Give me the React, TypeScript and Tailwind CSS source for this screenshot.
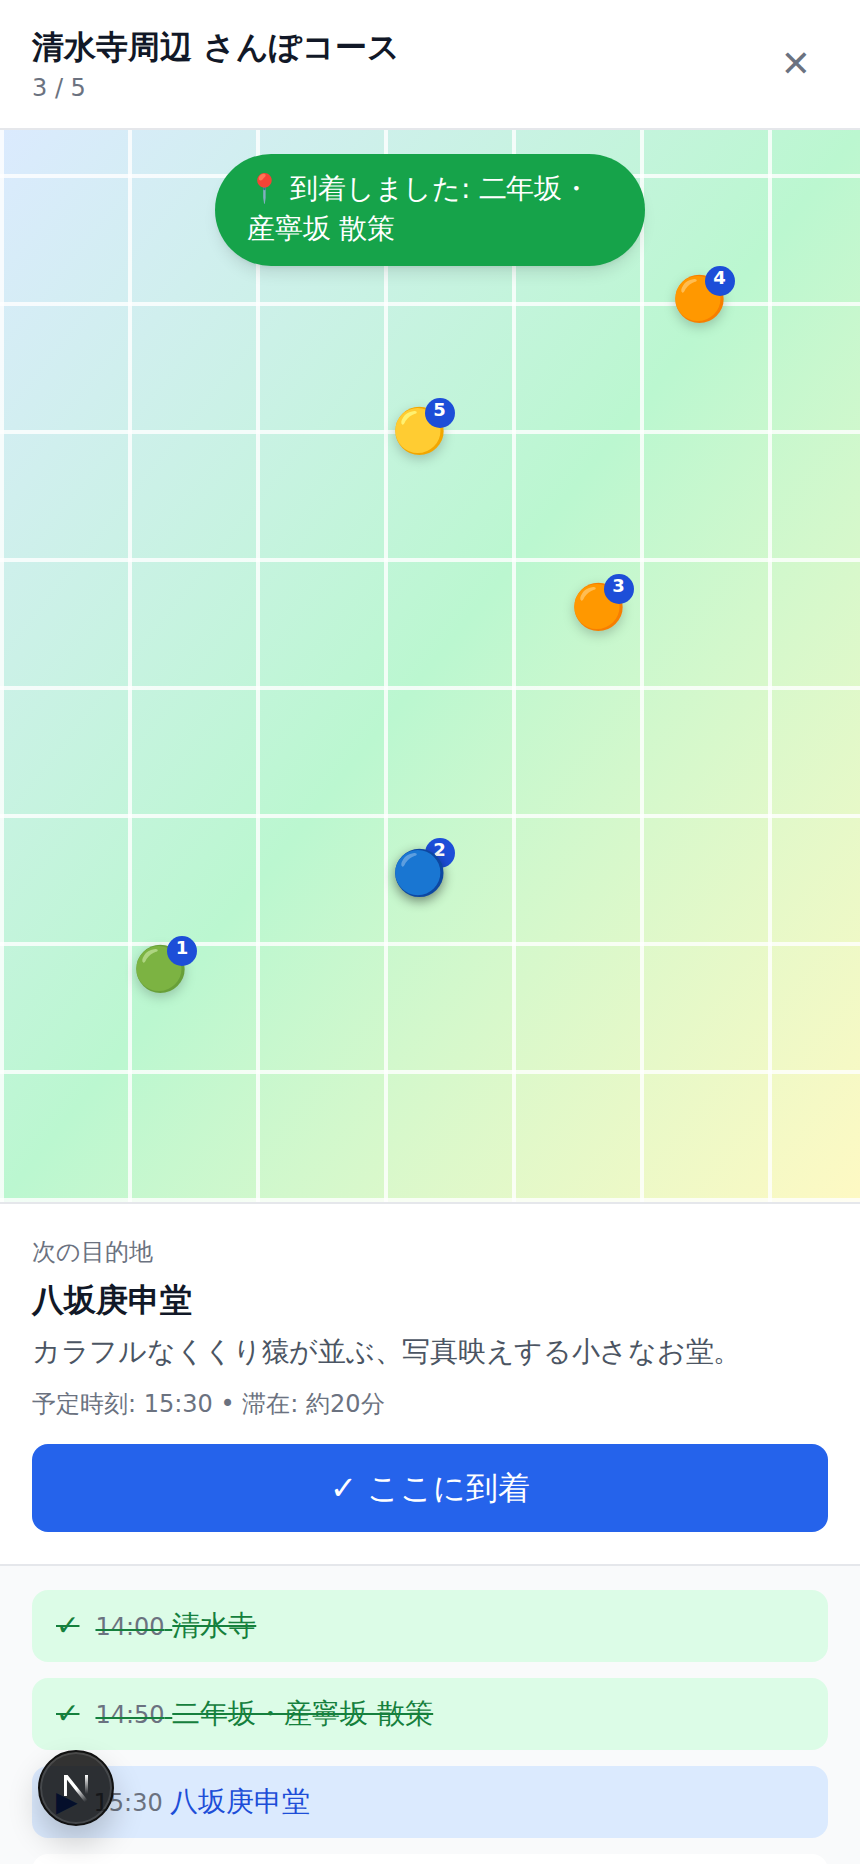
function Marker({ n, e, left, top, over, bx = 33 }: { n: number; e: string; left: number; top: number; over?: boolean; bx?: number }) {
  return (
    <div className="absolute" style={{ left, top }}>
      <div className={over ? "relative z-10 text-[44px] leading-none drop-shadow-[0_4px_6px_rgba(0,0,0,0.45)]" : "text-[44px] leading-none drop-shadow-[0_4px_6px_rgba(0,0,0,0.2)]"}>{e}</div>
      <div style={{ left: bx }} className={`absolute flex h-[30px] w-[30px] items-center justify-center rounded-full bg-[#1d4ed8] pb-[6px] text-[18px] font-bold leading-none text-white ${over ? "-top-[13px]" : "-top-[11px]"}`}>
        {n}
      </div>
    </div>
  );
}

function Row({ mark, time, name, cls, nameCls, strike }: { mark: string; time: string; name: string; cls: string; nameCls: string; strike?: boolean }) {
  return (
    <div className={`flex h-[72px] items-center gap-4 rounded-[16px] px-6 text-[28px] ${cls} ${nameCls} ${strike ? "line-through" : ""}`}>
      <span>{mark}</span>
      <span>
        <span className="text-[24px] text-[#6b7280]">{time} </span>
        <span>{name}</span>
      </span>
    </div>
  );
}

export default function App() {
  const hs = [0, 1, 2, 3, 4, 5, 6, 7, 8];
  return (
    <div lang="ja" className="relative h-[1864px] w-[860px] overflow-hidden bg-white font-['DejaVu_Sans',sans-serif]">
      <header className="flex h-[130px] items-center justify-between border-b-2 border-[#e5e7eb] px-8">
        <div className="pt-0.5">
          <h1 className="text-[32px] font-bold leading-[40px] text-[#111827]">清水寺周辺 さんぽコース</h1>
          <p className="mt-[5px] text-[24px] leading-[32px] text-[#6b7280]">3 / 5</p>
        </div>
        <span className="mr-[17px] text-[36px] text-[#6b7280]">✕</span>
      </header>
      <div className="relative h-[1072px] overflow-hidden bg-gradient-to-br from-[#dbeafe] via-[#bbf7d0] to-[#fef9c3]">
        {hs.map((i) => (
          <div key={i} className="absolute left-0 right-0 h-1 bg-white/80" style={{ top: 44 + i * 128 }} />
        ))}
        {hs.map((i) => (
          <div key={i} className="absolute bottom-0 top-0 w-1 bg-white/80" style={{ left: i * 128 }} />
        ))}
        <Marker n={1} e="🟢" left={133} top={817} bx={34} />
        <Marker n={2} e="🔵" left={391.5} top={721} over />
        <Marker n={3} e="🟠" left={570.5} top={454.5} />
        <Marker n={4} e="🟠" left={671.5} top={147} />
        <Marker n={5} e="🟡" left={391.5} top={279} />
        <div className="absolute left-[215px] top-[24px] w-[430px] rounded-[56px] bg-[#16a34a] px-8 pb-[17px] pt-[15px] text-[28px] leading-[40px] tracking-[-0.25px] text-white shadow-lg">
          📍 到着しました: 二年坂・産寧坂 散策
        </div>
      </div>
      <section className="border-y-2 border-[#e5e7eb] px-8 py-8">
        <p className="text-[24px] leading-[32px] text-[#6b7280]">次の目的地</p>
        <h2 className="mt-2 text-[32px] font-bold leading-[48px] text-[#111827]">八坂庚申堂</h2>
        <p className="mt-2 text-[28px] leading-[40px] tracking-[-0.28px] text-[#4b5563]">カラフルなくくり猿が並ぶ、写真映えする小さなお堂。</p>
        <p className="mt-4 text-[24px] leading-[32px] text-[#6b7280]">予定時刻: 15:30 • 滞在: 約20分</p>
        <button className="mt-6 h-[88px] w-full rounded-[16px] bg-[#2563eb] text-[32px] text-white">✓ ここに到着</button>
      </section>
      <div className="flex flex-col gap-4 bg-[#f9fafb] px-8 pb-6 pt-6">
        <Row mark="✓" time="14:00" name="清水寺" cls="bg-[#dcfce7]" nameCls="text-[#15803d]" strike />
        <Row mark="✓" time="14:50" name="二年坂・産寧坂 散策" cls="bg-[#dcfce7]" nameCls="text-[#15803d]" strike />
        <Row mark="▶" time="15:30" name="八坂庚申堂" cls="bg-[#dbeafe]" nameCls="text-[#1d4ed8]" />
        <div className="h-[72px] rounded-[16px] bg-white" />
      </div>
      <div className="absolute left-[38px] top-[1750px] flex h-[76px] w-[76px] items-center justify-center rounded-full border-2 border-[#111] bg-black/80 shadow-[0_16px_32px_rgba(0,0,0,0.2),inset_0_0_0_2px_rgba(255,255,255,0.12)]">
        <svg viewBox="0 0 25 27" className="h-[27px] w-[25px]">
          <defs>
            <linearGradient id="nd" x1="0.2" y1="0.1" x2="0.85" y2="1">
              <stop offset="0.45" stopColor="#fff" />
              <stop offset="1" stopColor="#fff" stopOpacity="0" />
            </linearGradient>
            <linearGradient id="nr" x1="0" y1="0" x2="0" y2="1">
              <stop offset="0" stopColor="#fff" />
              <stop offset="1" stopColor="#fff" stopOpacity="0" />
            </linearGradient>
          </defs>
          <path d="M0 0h3.6L25 27h-4.4L2.8 4.5V21H0Z" fill="url(#nd)" />
          <rect x="0" y="0" width="2.8" height="21" fill="#fff" />
          <rect x="21" y="0" width="3" height="19" fill="url(#nr)" />
        </svg>
      </div>
    </div>
  );
}
